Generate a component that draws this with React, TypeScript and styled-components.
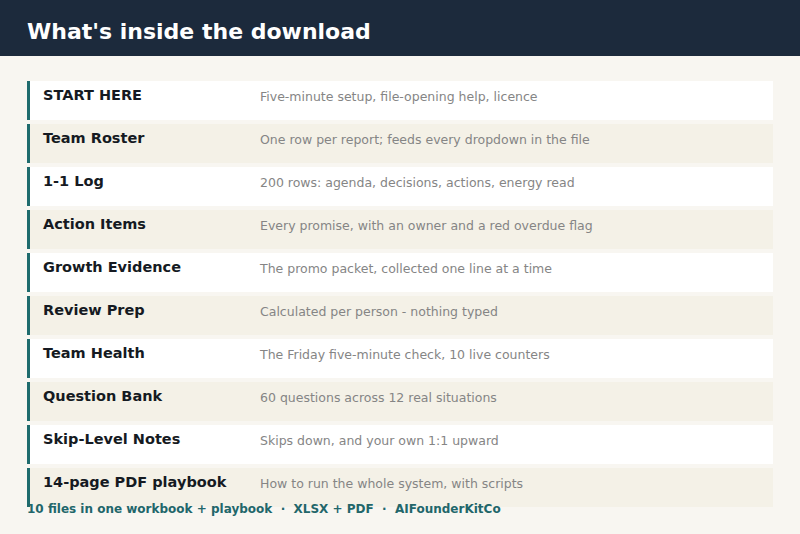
import React from "react";
import styled, { createGlobalStyle } from "styled-components";

const G = createGlobalStyle`
  body { margin:0; background:#f8f6f1; font-family:"DejaVu Sans", sans-serif; }
`;
const Header = styled.div`
  height:56px; box-sizing:border-box; background:#1c2a3c; display:flex; align-items:center; padding:6px 27px 0;
  color:#fff; font-weight:bold; font-size:22px;
`;
const List = styled.div`
  display:flex; flex-direction:column; gap:4px; padding:25px 27px 0 27px;
`;
const Row = styled.div<{ alt: boolean }>`
  height:39px; box-sizing:border-box; display:flex; align-items:flex-start;
  background:${p => (p.alt ? "#f4f1e7" : "#fff")}; border-left:3px solid #1f6b6d;
  padding-top:6px;
`;
const Title = styled.div`
  width:217px; padding-left:13px; font-weight:bold; font-size:14.5px; color:#151a22;
`;
const Desc = styled.div`
  font-size:12.5px; color:#858585; padding-top:2px;
`;
const Footer = styled.div`
  margin-top:-5px; padding-left:27px; font-weight:bold; font-size:12px; color:#22666a;
  position:relative;
`;
const rows = [
  ["START HERE", "Five-minute setup, file-opening help, licence"],
  ["Team Roster", "One row per report; feeds every dropdown in the file"],
  ["1-1 Log", "200 rows: agenda, decisions, actions, energy read"],
  ["Action Items", "Every promise, with an owner and a red overdue flag"],
  ["Growth Evidence", "The promo packet, collected one line at a time"],
  ["Review Prep", "Calculated per person - nothing typed"],
  ["Team Health", "The Friday five-minute check, 10 live counters"],
  ["Question Bank", "60 questions across 12 real situations"],
  ["Skip-Level Notes", "Skips down, and your own 1:1 upward"],
  ["14-page PDF playbook", "How to run the whole system, with scripts"],
];
export default function App() {
  return (
    <>
      <G />
      <Header>What's inside the download</Header>
      <List>
        {rows.map(([t, d], i) => (
          <Row key={t} alt={i % 2 === 1}>
            <Title>{t}</Title>
            <Desc>{d}</Desc>
          </Row>
        ))}
      </List>
      <Footer>10 files in one workbook + playbook &nbsp;·&nbsp; XLSX + PDF &nbsp;·&nbsp; AIFounderKitCo</Footer>
    </>
  );
}
